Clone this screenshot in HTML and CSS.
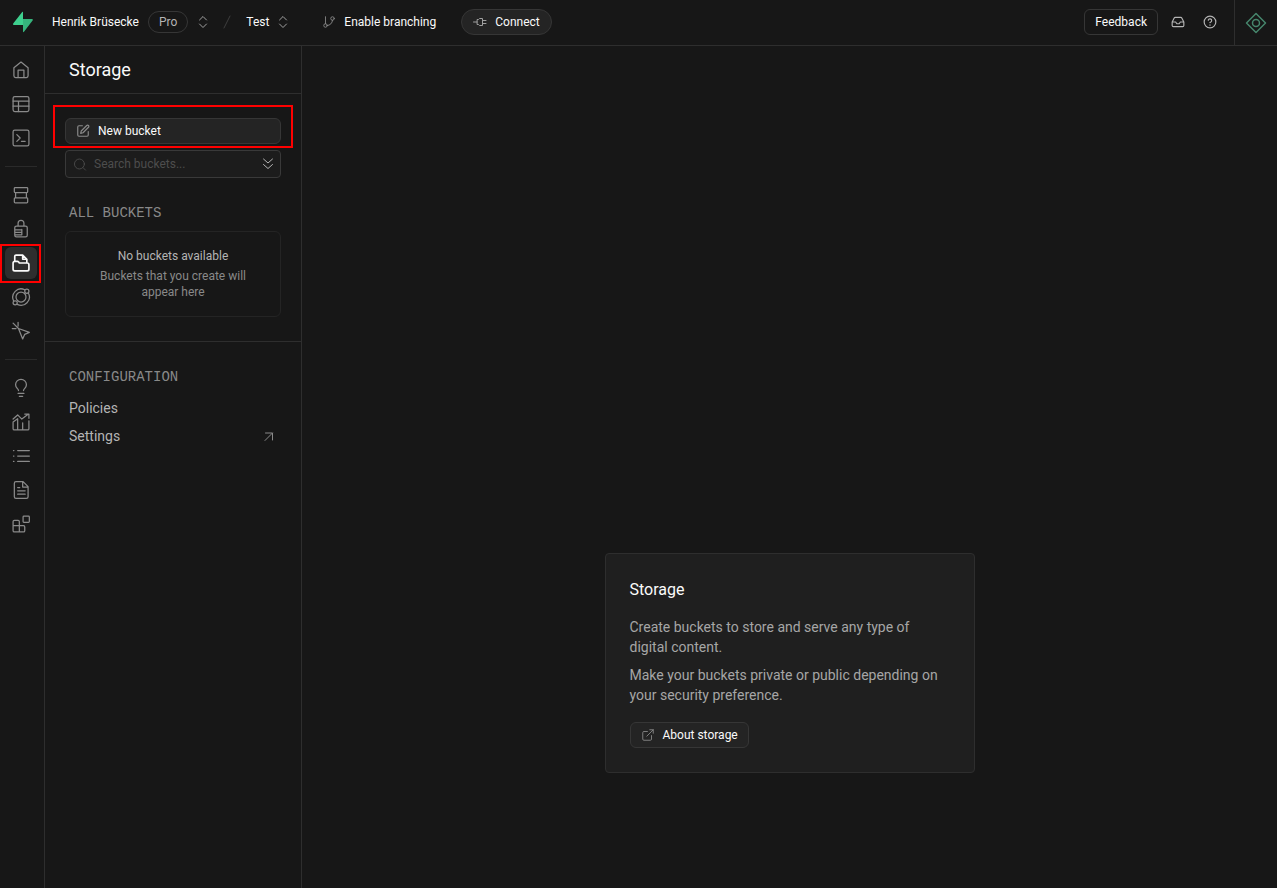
FILE: index.html
```html
<!DOCTYPE html>
<html lang="en">
<head>
  <meta charset="UTF-8">
  <meta name="viewport" content="width=device-width, initial-scale=1.0">
  <title>Storage | Supabase</title>
  <link rel="stylesheet" href="styles.css">
</head>
<body>
  <header class="topbar">
    <a class="logo" href="#" aria-label="Home">
      <svg width="22" height="22" viewBox="0 0 22 22">
        <path d="M10 1.200C10.600.400 11 .600 11 1.500V14H2.200C1 14 .8 13 1.400 12.200Z" fill="#3ecf8e"/>
        <path d="M12 20.800C11.400 21.600 11 21.300 11 20.500V8H19.800C21 8 21.200 8.800 20.600 9.600Z" fill="#36b37c"/>
      </svg>
    </a>
    <a class="org" href="#">Henrik Brüsecke</a>
    <span class="plan">Pro</span>
    <button class="switch" aria-label="Switch organization"><svg width="12" height="14" viewBox="0 0 12 14"><path d="M2.500 5 6 1.500 9.500 5M2.500 9 6 12.500 9.500 9"/></svg></button>
    <svg class="slash" width="10" height="16" viewBox="0 0 10 16"><path d="M8 2 2 14"/></svg>
    <a class="project" href="#">Test</a>
    <button class="switch" aria-label="Switch project"><svg width="12" height="14" viewBox="0 0 12 14"><path d="M2.500 5 6 1.500 9.500 5M2.500 9 6 12.500 9.500 9"/></svg></button>
    <button class="branching">
      <svg width="14" height="14" viewBox="0 0 24 24"><path d="M6 3v12M18 9a9 9 0 0 1-9 9"/><circle cx="18" cy="6" r="3"/><circle cx="6" cy="18" r="3"/></svg>
      Enable branching
    </button>
    <button class="btn connect">
      <svg width="14" height="14" viewBox="0 0 14 14"><path d="M.5 7h3.500M4.500 4.500h1l1-1h3v7h-3l-1-1h-1zM9.500 5.500H13M9.500 8.500H13"/></svg>
      Connect
    </button>
    <div class="topbar-right">
      <button class="btn feedback">Feedback</button>
      <button class="icon-btn" aria-label="Inbox">
        <svg width="14" height="14" viewBox="0 0 24 24"><path d="M2 12h6l2 3h4l2-3h6M5.500 5.100 2 12v6a2 2 0 0 0 2 2h16a2 2 0 0 0 2-2v-6l-3.500-6.900A2 2 0 0 0 16.800 4H7.200a2 2 0 0 0-1.700 1.100z"/></svg>
      </button>
      <button class="icon-btn" aria-label="Help">
        <svg width="14" height="14" viewBox="0 0 24 24"><circle cx="12" cy="12" r="10"/><path d="M9 9a3 3 0 0 1 5.900 1c0 2-3 3-3 3M12 17v.5"/></svg>
      </button>
      <button class="assistant" aria-label="Assistant">
        <svg width="22" height="22" viewBox="0 0 22 22"><path d="M11 1.500 20.500 11 11 20.500 1.500 11Z"/><circle cx="11" cy="11" r="3.500"/></svg>
      </button>
    </div>
  </header>

  <div class="layout">
    <nav class="rail">
      <a href="#" aria-label="Home"><svg viewBox="0 0 24 24"><path d="M3.500 9.200 12 2.500l8.500 6.700V19a2 2 0 0 1-2 2h-13a2 2 0 0 1-2-2zM8.500 21v-9h7v9"/></svg></a>
      <a href="#" aria-label="Table editor"><svg viewBox="0 0 24 24"><rect x="2.500" y="3" width="19" height="18" rx="2"/><path d="M2.500 8.500h19M2.500 14.500h19M9 8.500V21"/></svg></a>
      <a href="#" aria-label="SQL editor"><svg viewBox="0 0 24 24"><rect x="2.500" y="2.500" width="19" height="19" rx="2"/><path d="m7 8 4 4-4 4M12.500 16H17"/></svg></a>
      <hr>
      <a href="#" aria-label="Database"><svg viewBox="0 0 24 24"><path d="M5 3h14a1 1 0 0 1 1 1v4a1 1 0 0 1-1 1H5a1 1 0 0 1-1-1V4a1 1 0 0 1 1-1zM5.500 9v6.500M18.500 9v6.500M5 15.500h14a1 1 0 0 1 1 1v4a1 1 0 0 1-1 1H5a1 1 0 0 1-1-1v-4a1 1 0 0 1 1-1z"/></svg></a>
      <a href="#" aria-label="Authentication"><svg viewBox="0 0 24 24"><path d="M8.500 8V5a3.500 3.500 0 0 1 7 0v3M6.500 8.500h11a2 2 0 0 1 2 2v9a2 2 0 0 1-2 2h-11a2 2 0 0 1-2-2v-9a2 2 0 0 1 2-2zM4.500 13H13M4.500 16H13M4.500 19H13M13 12.500V19"/></svg></a>
      <a href="#" class="active" aria-label="Storage"><svg viewBox="0 0 24 24"><path d="M4.500 10V4A1.500 1.500 0 0 1 6 2.500H14l5 5V12M14 2.500v5h5M2.500 12a2 2 0 0 1 2-2h3a2 2 0 0 1 1.700.9L10 12h9.500a2 2 0 0 1 2 2v5.500a2 2 0 0 1-2 2h-15a2 2 0 0 1-2-2z"/></svg></a>
      <a href="#" aria-label="Edge functions"><svg viewBox="0 0 24 24"><circle cx="12" cy="12" r="6"/><circle cx="19" cy="5" r="2.500"/><circle cx="5" cy="19" r="2.500"/><path d="M16.500 3.300A10 10 0 0 0 3.200 16.800M7.500 20.900A10 10 0 0 0 20.800 7.200"/></svg></a>
      <a href="#" aria-label="Realtime"><svg viewBox="0 0 24 24"><path d="m9 9 5 12.500 2.500-5.500 5.500-2.300zM1.500 9H6M8.500 1.500V6M2.500 2.500 9 9"/></svg></a>
      <hr>
      <a href="#" aria-label="Advisors"><svg viewBox="0 0 24 24"><path d="M9 15c0-2-3.500-3-3.500-7a6.500 6.500 0 0 1 13 0c0 4-3.500 5-3.500 7M8.500 18.500h7M10 22h4"/></svg></a>
      <a href="#" aria-label="Reports"><svg viewBox="0 0 24 24"><path d="M2.500 8.500 8 3.500l5 5 8-6M16.500 2.500h5v5M2.500 12v8a1.500 1.500 0 0 0 1.500 1.500h16a1.500 1.500 0 0 0 1.500-1.500v-9.500M2.500 12 8 8v13.500M14 21.500V13"/></svg></a>
      <a href="#" aria-label="Logs"><svg viewBox="0 0 24 24"><path d="M8 5.500h14M8 12h14M8 18.500h14M3 5.500h.5M3 12h.5M3 18.500h.5"/></svg></a>
      <a href="#" aria-label="API docs"><svg viewBox="0 0 24 24"><path d="M14.500 2H6a2 2 0 0 0-2 2v16a2 2 0 0 0 2 2h12.500a2 2 0 0 0 2-2V8zM14 2v6.500h6.500M8 9h2.500M8 13h9M8 17h9"/></svg></a>
      <a href="#" aria-label="Integrations"><svg viewBox="0 0 24 24"><path d="M10 21.500V9a1.500 1.500 0 0 0-1.500-1.500H4A1.500 1.500 0 0 0 2.500 9v11A1.500 1.500 0 0 0 4 21.500h11a1.500 1.500 0 0 0 1.500-1.500v-4.500A1.500 1.500 0 0 0 15 14H2.500"/><rect x="14.500" y="2.500" width="7.500" height="7.500" rx="1"/></svg></a>
    </nav>

    <aside class="panel">
      <h1>Storage</h1>
      <div class="buckets">
        <div class="new-wrap">
          <button class="btn new-bucket">
            <svg width="14" height="14" viewBox="0 0 24 24"><path d="M11 3H5a2 2 0 0 0-2 2v14a2 2 0 0 0 2 2h14a2 2 0 0 0 2-2v-6M18.400 2.600a2.100 2.100 0 0 1 3 3L12 15l-4 1 1-4z"/></svg>
            New bucket
          </button>
        </div>
        <div class="search">
          <svg width="14" height="14" viewBox="0 0 24 24"><circle cx="11" cy="12" r="8.500"/><path d="m21.500 22.500-4.300-4.300"/></svg>
          <input type="text" placeholder="Search buckets..." aria-label="Search buckets">
          <button aria-label="Sort buckets"><svg width="14" height="14" viewBox="0 0 14 14"><path d="m2.500 2 4.500 4 4.500-4M2.500 7.500l4.500 4 4.500-4"/></svg></button>
        </div>
        <h2>All buckets</h2>
        <div class="empty">
          <p class="empty-title">No buckets available</p>
          <p>Buckets that you create will appear here</p>
        </div>
      </div>
      <div class="config">
        <h2>Configuration</h2>
        <a href="#">Policies</a>
        <a href="#">Settings <svg width="14" height="14" viewBox="0 0 14 14"><path d="M3 11.500l7.500-7.500M3.500 4h7v7"/></svg></a>
      </div>
    </aside>

    <main>
      <section class="card">
        <h3>Storage</h3>
        <p>Create buckets to store and serve any type of digital content.</p>
        <p>Make your buckets private or public depending on your security preference.</p>
        <a class="btn about" href="#">
          <svg width="14" height="14" viewBox="0 0 24 24"><path d="M15 3h6v6M10 14 21 3M18 13v6a2 2 0 0 1-2 2H5a2 2 0 0 1-2-2V8a2 2 0 0 1 2-2h6"/></svg>
          About storage
        </a>
      </section>
    </main>
  </div>
</body>
</html>
```
FILE: styles.css
```css
* { box-sizing: border-box; }
body { margin: 0; min-height: 100vh; display: flex; flex-direction: column; background: #171717; color: #fafafa; font: 12px/16px Roboto, sans-serif; }
a { color: inherit; text-decoration: none; }
button { font: inherit; color: inherit; background: none; border: none; padding: 0; cursor: pointer; }
h1, h2, h3, p { margin: 0; font-weight: 400; }
svg { display: block; flex: none; fill: none; stroke: #8a8a8a; stroke-width: 1.5; stroke-linecap: round; stroke-linejoin: round; }

/* top bar */
.topbar { display: flex; align-items: center; height: 46px; padding: 0 0 1px 12px; border-bottom: 1px solid #2e2e2e; white-space: nowrap; }
.logo { margin-right: 18px; }
.logo svg { stroke: none; }
.plan { margin: 0 8px 0 9px; padding: 2px 10px; border: 1px solid #363636; border-radius: 20px; color: #b4b4b4; }
.switch { padding: 0 1px; }
.switch svg { stroke: #a0a0a0; stroke-width: 1; }
.slash { margin: 0 14px 0 12px; stroke: #3e3e3e; stroke-width: 1; }
.project { margin-right: 7px; }
.branching { display: flex; align-items: center; gap: 8px; margin: 0 25px 0 32px; }
.btn { display: inline-flex; align-items: center; gap: 8px; height: 26px; padding: 0 10px; background: #242424; border: 1px solid #363636; border-radius: 6px; }
.connect { padding: 0 11px; border-radius: 20px; }
.connect svg { stroke: #a0a0a0; stroke-width: 1; }
.topbar-right { display: flex; align-items: center; align-self: stretch; margin-left: auto; }
.feedback { background: transparent; margin-right: 4px; }
.icon-btn { display: grid; place-items: center; width: 32px; height: 26px; }
.icon-btn svg { stroke: #b4b4b4; stroke-width: 2; }
.assistant { align-self: stretch; width: 43px; margin-left: 8px; margin-bottom: -1px; border-left: 1px solid #2e2e2e; display: grid; place-items: center; }
.assistant svg { stroke: #46866c; stroke-width: 1.5; }

.layout { flex: 1; display: flex; }

/* icon rail */
.rail { width: 45px; padding: 8px 7px 8px 5px; display: flex; flex-direction: column; gap: 2px; border-right: 1px solid #2e2e2e; }
.rail a { position: relative; display: grid; place-items: center; width: 32px; height: 32px; border-radius: 6px; }
.rail svg { width: 20px; height: 20px; }
.rail hr { width: 100%; height: 1px; margin: 10px 0; border: none; background: #2a2a2a; }
.rail .active { background: #2e2e2e; }
.rail .active svg { stroke: #fafafa; stroke-width: 2; }
.rail .active::after { content: ""; position: absolute; inset: -3px -4px -4px -5px; border: 2px solid #f00; }

/* storage panel */
.panel { width: 257px; border-right: 1px solid #2e2e2e; }
.panel h1 { height: 48px; padding: 12px 24px; font-size: 18px; line-height: 24px; border-bottom: 1px solid #2e2e2e; }
.panel h2 { padding: 0 4px; font: 14px/16px "Liberation Mono", monospace; text-transform: uppercase; color: #898989; }
.buckets { padding: 24px 20px; border-bottom: 1px solid #2e2e2e; }
.new-wrap { position: relative; margin-bottom: 6px; }
.new-wrap::after { content: ""; position: absolute; inset: -13px -12px -4px; border: 2px solid #f00; pointer-events: none; }
.new-bucket { width: 100%; }
.new-bucket svg { stroke-width: 2; }
.search { display: flex; align-items: center; gap: 7px; height: 28px; margin-bottom: 27px; padding: 0 5px 0 7px; background: #1c1c1c; border: 1px solid #393939; border-radius: 4px; }
.search svg { stroke: #4d4d4d; }
.search input { flex: 1; min-width: 0; padding: 0; background: none; border: none; outline: none; font: inherit; color: inherit; }
.search input::placeholder { color: #4d4d4d; }
.search button svg { stroke: #b4b4b4; stroke-width: 1; }
.empty { margin-top: 10px; padding: 16px 24px; height: 86px; border: 1px solid #242424; border-radius: 6px; text-align: center; color: #898989; }
.empty-title { margin-bottom: 4px; color: #b4b4b4; }
.config { padding: 27px 20px; }
.config h2 { margin-bottom: 9px; }
.config a { display: flex; align-items: center; justify-content: space-between; height: 28px; padding: 0 5px 0 4px; font-size: 14px; color: #b4b4b4; }
.config svg { stroke-width: 1; }

/* intro card */
main { flex: 1; padding-top: 507px; }
.card { width: 370px; margin: 0 auto; padding: 24px; background: #1f1f1f; border: 1px solid #2e2e2e; border-radius: 4px; }
.card h3 { margin-bottom: 15px; font-size: 16px; line-height: 24px; }
.card p { margin-bottom: 8px; font-size: 14px; line-height: 20px; color: #a6a6a6; }
.about { margin-top: 9px; }
```
